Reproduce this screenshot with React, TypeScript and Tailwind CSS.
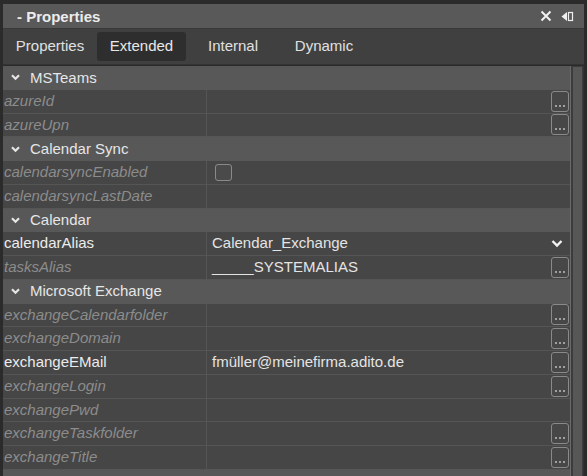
import React from "react";

type Row =
  | { kind: "cat"; label: string }
  | { kind: "prop"; name: string; ro: boolean; value?: string; btn?: boolean; check?: boolean; combo?: boolean };

const rows: Row[] = [
  { kind: "cat", label: "MSTeams" },
  { kind: "prop", name: "azureId", ro: true, btn: true },
  { kind: "prop", name: "azureUpn", ro: true, btn: true },
  { kind: "cat", label: "Calendar Sync" },
  { kind: "prop", name: "calendarsyncEnabled", ro: true, check: true },
  { kind: "prop", name: "calendarsyncLastDate", ro: true },
  { kind: "cat", label: "Calendar" },
  { kind: "prop", name: "calendarAlias", ro: false, value: "Calendar_Exchange", combo: true },
  { kind: "prop", name: "tasksAlias", ro: true, value: "_____SYSTEMALIAS", btn: true },
  { kind: "cat", label: "Microsoft Exchange" },
  { kind: "prop", name: "exchangeCalendarfolder", ro: true, btn: true },
  { kind: "prop", name: "exchangeDomain", ro: true, btn: true },
  { kind: "prop", name: "exchangeEMail", ro: false, value: "fmüller@meinefirma.adito.de", btn: true },
  { kind: "prop", name: "exchangeLogin", ro: true, btn: true },
  { kind: "prop", name: "exchangePwd", ro: true },
  { kind: "prop", name: "exchangeTaskfolder", ro: true, btn: true },
  { kind: "prop", name: "exchangeTitle", ro: true, btn: true },
  { kind: "cat", label: "Tenant" },
];

function Chevron({ className = "" }: { className?: string }) {
  return (
    <svg width="9" height="7" viewBox="0 0 9 7" className={className}>
      <path d="M1 1.3 L4.5 4.8 L8 1.3" fill="none" stroke="#e6e6e6" strokeWidth="2.2" />
    </svg>
  );
}

function DotsButton() {
  return (
    <div className="w-[18px] h-[21px] mr-[1px] border border-[#8a8a8a] rounded-[3px] bg-[#474747] flex items-end justify-center gap-[2px] pb-[4px]">
      <span className="w-[2px] h-[2px] bg-[#a0a0a0]" />
      <span className="w-[2px] h-[2px] bg-[#a0a0a0]" />
      <span className="w-[2px] h-[2px] bg-[#a0a0a0]" />
    </div>
  );
}

export default function App() {
  return (
    <div
      className="w-[587px] h-[476px] bg-[#2b2b2b] pt-[4px] overflow-hidden"
      style={{ fontFamily: '"Liberation Sans", Arial, sans-serif' }}
    >
      <div className="ml-[3px] w-[581px] h-[472px] flex flex-col">
        {/* Title bar */}
        <div className="h-[25px] bg-[#595959] border-b border-[#3a3a3a] flex items-center pl-[14px] pr-[10px] shrink-0">
          <span className="text-[15px] font-bold text-[#ececec] leading-none mt-[1px]">- Properties</span>
          <div className="ml-auto flex items-center gap-[9px]">
            <svg width="12" height="12" viewBox="0 0 12 12">
              <path d="M1.5 1.5 L10.5 10.5 M10.5 1.5 L1.5 10.5" stroke="#f0f0f0" strokeWidth="2" />
            </svg>
            <svg width="13" height="11" viewBox="0 0 13 11">
              <path d="M0.5 5.5 L6 1 L6 10 Z" fill="#f0f0f0" />
              <rect x="7.5" y="1.5" width="4" height="8" fill="none" stroke="#f0f0f0" strokeWidth="1.2" />
            </svg>
          </div>
        </div>
        {/* Tabs */}
        <div className="h-[36px] bg-[#404040] flex items-center shrink-0 border-b border-[#333]">
          {[
            { t: "Properties", w: "w-[94px]", a: false },
            { t: "Extended", w: "w-[89px]", a: true },
            { t: "Internal", w: "w-[94px]", a: false },
            { t: "Dynamic", w: "w-[88px]", a: false },
          ].map((tab) => (
            <div
              key={tab.t}
              className={`${tab.w} h-[29px] flex items-center justify-center text-[15px] rounded-[3px] ${
                tab.a ? "bg-[#2e2e2e] text-[#e8e8e8]" : "text-[#e0e0e0]"
              }`}
            >
              {tab.t}
            </div>
          ))}
        </div>
        {/* Content */}
        <div className="flex flex-1 min-h-0 pt-[1px]">
          <div className="w-[567px] flex flex-col">
            {rows.map((r, i) =>
              r.kind === "cat" ? (
                <div
                  key={i}
                  className="h-[23.75px] shrink-0 bg-[#585858] flex items-center pl-[8px] text-[15px] text-[#e6e6e6]"
                >
                  <Chevron className="mr-[10px]" />
                  <span>{r.label}</span>
                </div>
              ) : (
                <div
                  key={i}
                  className="h-[23.75px] shrink-0 bg-[#464646] border-b border-[#555555] flex text-[15px]"
                >
                  <div
                    className={`w-[204px] border-r border-[#555555] flex items-center pl-[1px] whitespace-nowrap overflow-hidden ${
                      r.ro ? "italic text-[#8c8c8c]" : "text-[#ececec]"
                    }`}
                  >
                    {r.name}
                  </div>
                  <div className="flex-1 flex items-center pl-[5px] text-[#e4e4e4]">
                    {r.check && (
                      <div className="ml-[3px] w-[17px] h-[17px] border-[1.5px] border-[#8a8a8a] rounded-[3px] bg-[#4a4a4a]" />
                    )}
                    {r.value && <span className="whitespace-nowrap">{r.value}</span>}
                    <div className="ml-auto flex items-center">
                      {r.btn && <DotsButton />}
                      {r.combo && (
                        <svg width="12" height="9" viewBox="0 0 12 9" className="mr-[7px]">
                          <path d="M1.5 2 L6 6.5 L10.5 2" fill="none" stroke="#f2f2f2" strokeWidth="2.4" />
                        </svg>
                      )}
                    </div>
                  </div>
                </div>
              )
            )}
          </div>
          {/* Scrollbar */}
          <div className="w-[14px] border-l border-[#6a6a6a] border-r border-r-[#333] bg-[#3c3c3c] pl-[2px] pr-[1px] pt-[1px]">
            <div className="h-full bg-[#575757]" />
          </div>
        </div>
      </div>
    </div>
  );
}
